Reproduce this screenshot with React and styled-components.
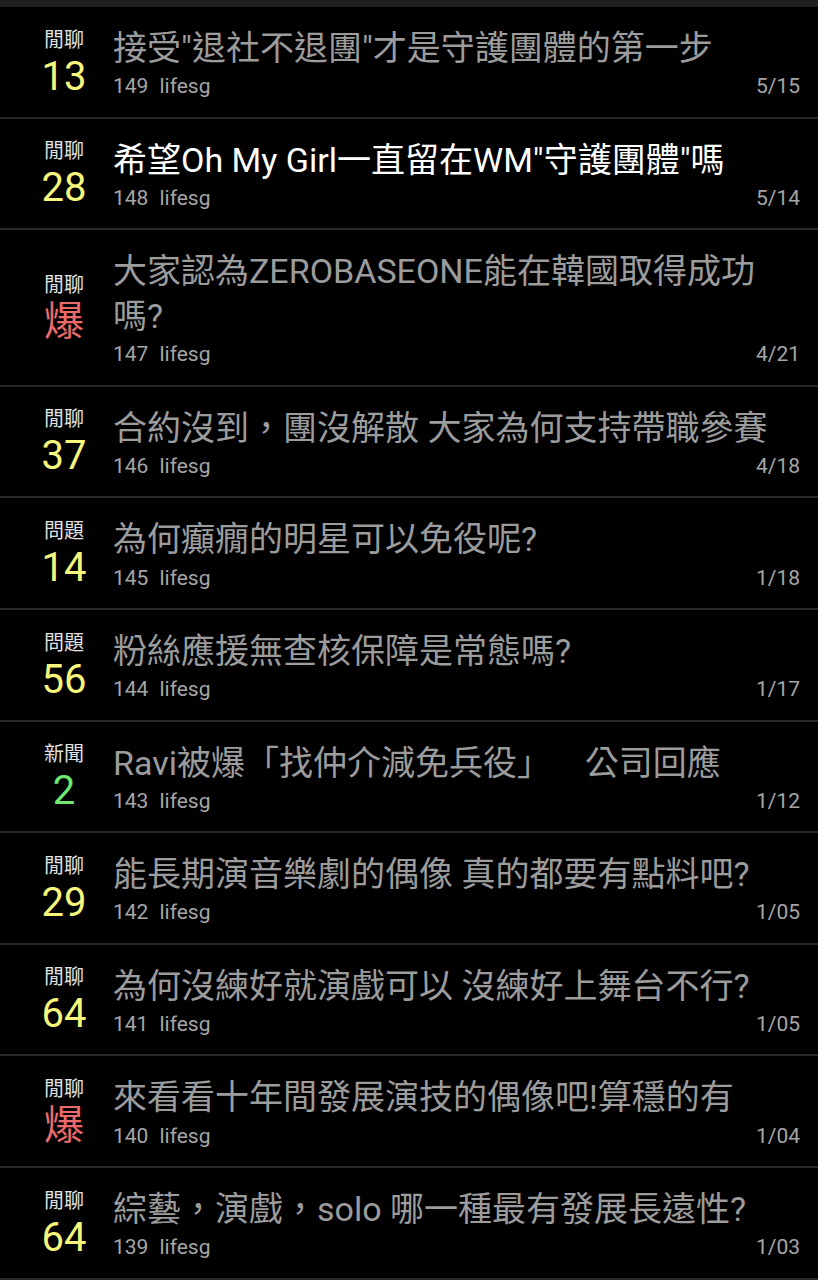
import React from "react"
import styled, { createGlobalStyle } from "styled-components"

const GlobalStyle = createGlobalStyle`
	html, body {
		margin: 0;
		padding: 0;
		background: #000;
	}
	body {
		font-family: Roboto, "Noto Sans CJK TC", sans-serif;
	}
`

const Page = styled.div`
	width: 818px;
	min-height: 1280px;
	background: #000;
	border-top: 7px solid #202020;
`

const List = styled.ul`
	list-style: none;
	margin: 0;
	padding: 0;
`

const Row = styled.li`
	display: flex;
	align-items: center;
	padding: 19px 18px 18.3px 0;
	border-bottom: 2px solid #282828;
`

const Side = styled.div`
	flex: 0 0 80px;
	margin-left: 24px;
	margin-right: 9px;
	display: flex;
	flex-direction: column;
	align-items: center;
`

const Category = styled.div`
	font-size: 20px;
	line-height: 24px;
	color: #e2e2e2;
`

const Count = styled.div`
	margin-top: 5px;
	font-size: 40px;
	line-height: 40px;
	color: ${(p) => p.$color};
`

const Body = styled.div`
	flex: 1;
	min-width: 0;
`

const Title = styled.div`
	font-size: 34px;
	line-height: 45px;
	margin-right: 20px;
	color: ${(p) => (p.$unread ? "#ffffff" : "#9c9c9c")};
`

const Meta = styled.div`
	display: flex;
	align-items: center;
	margin-top: 3.3px;
	font-size: 21px;
	line-height: 24px;
	color: #a6a6a6;
`

const Author = styled.span`
	margin-left: 11px;
	flex: 1;
`

const Date = styled.span``

const countColor = (n) => {
	if (n === "爆") return "#ec6a6a"
	if (Number(n) < 10) return "#6ee86e"
	return "#f7f77c"
}

const posts = [
	{ cat: "閒聊", n: "13", title: "接受\"退社不退團\"才是守護團體的第一步", id: 149, date: "5/15" },
	{ cat: "閒聊", n: "28", title: "希望Oh My Girl一直留在WM\"守護團體\"嗎", id: 148, date: "5/14", unread: true },
	{ cat: "閒聊", n: "爆", title: "大家認為ZEROBASEONE能在韓國取得成功嗎?", id: 147, date: "4/21" },
	{ cat: "閒聊", n: "37", title: "合約沒到，團沒解散 大家為何支持帶職參賽", id: 146, date: "4/18" },
	{ cat: "問題", n: "14", title: "為何癲癇的明星可以免役呢?", id: 145, date: "1/18" },
	{ cat: "問題", n: "56", title: "粉絲應援無查核保障是常態嗎?", id: 144, date: "1/17" },
	{ cat: "新聞", n: "2", title: "Ravi被爆「找仲介減免兵役」\u3000\u00a0 公司回應", id: 143, date: "1/12" },
	{ cat: "閒聊", n: "29", title: "能長期演音樂劇的偶像 真的都要有點料吧?", id: 142, date: "1/05" },
	{ cat: "閒聊", n: "64", title: "為何沒練好就演戲可以 沒練好上舞台不行?", id: 141, date: "1/05" },
	{ cat: "閒聊", n: "爆", title: "來看看十年間發展演技的偶像吧!算穩的有", id: 140, date: "1/04" },
	{ cat: "閒聊", n: "64", title: "綜藝，演戲，solo 哪一種最有發展長遠性?", id: 139, date: "1/03" },
]

const App = () => {
	return (
		<Page>
			<GlobalStyle />
			<List>
				{posts.map((p) => (
					<Row key={p.id}>
						<Side>
							<Category>{p.cat}</Category>
							<Count $color={countColor(p.n)}>{p.n}</Count>
						</Side>
						<Body>
							<Title $unread={p.unread}>{p.title}</Title>
							<Meta>
								<span>{p.id}</span>
								<Author>lifesg</Author>
								<Date>{p.date}</Date>
							</Meta>
						</Body>
					</Row>
				))}
			</List>
		</Page>
	)
}

export default App
